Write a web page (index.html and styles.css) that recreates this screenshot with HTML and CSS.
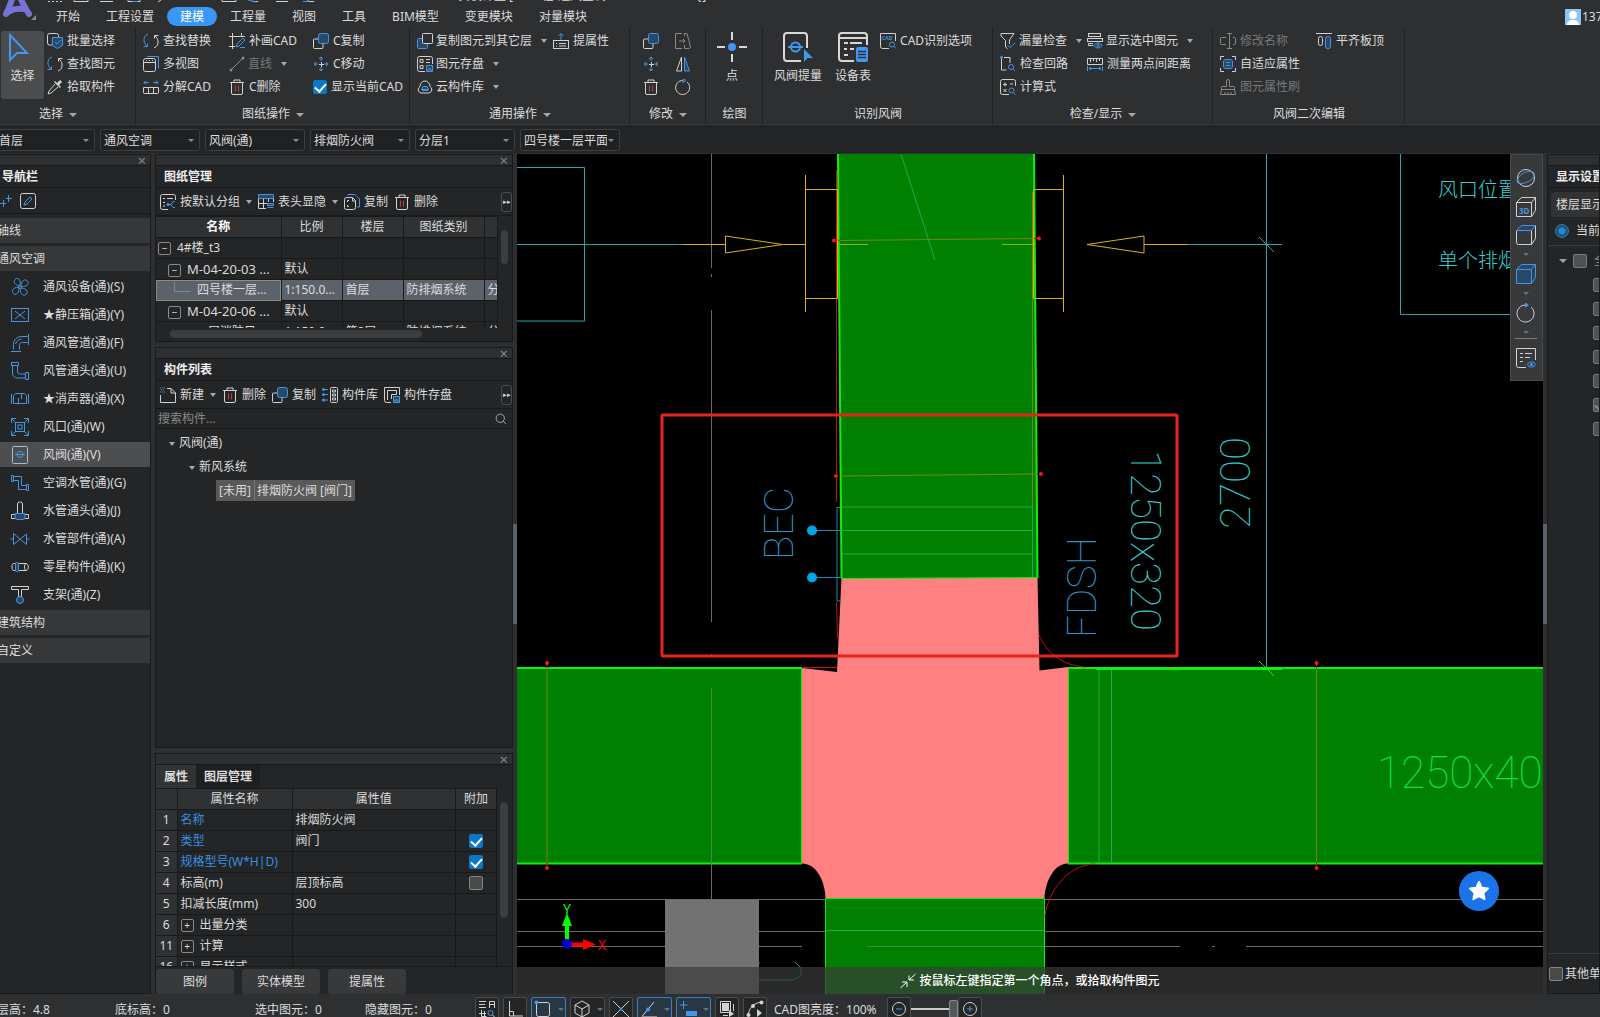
FILE: index.html
```html
<!DOCTYPE html>
<html lang="zh-CN">
<head>
  <meta charset="UTF-8">
  <meta name="viewport" content="width=device-width, initial-scale=1.0">
  <title>安装计量</title>
  <link rel="stylesheet" href="styles.css">
</head>
<body>
  <!-- Icon sprite -->
  <svg class="sprite" aria-hidden="true">
    <symbol id="i-cursor" viewBox="0 0 24 30"><path class="b2" d="M3 3v25l7-7h10z"/></symbol>
    <symbol id="i-batch" viewBox="0 0 16 16"><path class="w" d="M5 12H2.500a2 2 0 0 1-2-2V2.500a2 2 0 0 1 2-2h7a2 2 0 0 1 2 2V4"/><path class="bf" d="M5.500 4.500h10v8l-5 3-5-3z"/><path class="b" d="M8 9l2 2 4-4"/></symbol>
    <symbol id="i-find" viewBox="0 0 16 16"><path class="b" d="M5 1C2 2 .5 5 1 8c.3 2 1.500 4 3 5M.5 13.500h4v-3"/><path class="w" d="M11 15c3-1 4.500-4 4-7-.3-2-1.500-4-3-5M15.500 2.500h-4v3"/></symbol>
    <symbol id="i-picker" viewBox="0 0 16 16"><path class="w" d="M8 5l-6 7-1 3 3-1 7-6"/><path class="wf" d="M7 3l6 6 1-1-2-2 3-3-2-2-3 3-2-2z"/></symbol>
    <symbol id="i-views" viewBox="0 0 16 16"><path class="b" d="M4 .5h11.500v12"/><rect class="w" x=".5" y="2.500" width="12" height="13" rx="2"/><path class="w" d="M.5 6.500h12M3 4.500h1M6 4.500h1M9 4.500h1"/></symbol>
    <symbol id="i-split" viewBox="0 0 16 16"><path class="b" d="M1 3.500h5M3 1.500l-2 2 2 2M10 3.500h5M13 1.500l2 2-2 2"/><path class="w" d="M.5 8.500v5a1 1 0 0 0 1 1h13a1 1 0 0 0 1-1v-5zM5.500 8.500v6M10.500 8.500v6"/></symbol>
    <symbol id="i-draw" viewBox="0 0 16 16"><path class="w" d="M0 3.500h16M3.500 0v16M12.500 0v4M0 13.500h6"/><path class="b" d="M7 14l1-3 6-6 2 2-6 6zM11 14.500h5"/></symbol>
    <symbol id="i-line" viewBox="0 0 16 16"><path class="g" d="M2 14L14 2"/><circle class="gf" cx="2" cy="14" r="1.500"/><circle class="gf" cx="14" cy="2" r="1.500"/></symbol>
    <symbol id="i-trash" viewBox="0 0 16 16"><path class="w" d="M1 3.500h14M5 3V1h6v2M2.500 4v10a1.500 1.500 0 0 0 1.500 1.500h8a1.500 1.500 0 0 0 1.500-1.500V4"/><path class="r" d="M6.500 6.500v6M9.500 6.500v6"/></symbol>
    <symbol id="i-copy" viewBox="0 0 16 16"><path class="w" d="M5 6H1.500a1 1 0 0 0-1 1v7.500a1 1 0 0 0 1 1H9a1 1 0 0 0 1-1V11"/><rect class="bf" x="5.500" y=".5" width="10" height="10" rx="2"/></symbol>
    <symbol id="i-copyto" viewBox="0 0 16 16"><rect class="bf" x=".5" y="5.500" width="10" height="10" rx="1"/><rect class="wd" x="5.500" y=".5" width="10" height="10" rx="1"/></symbol>
    <symbol id="i-move" viewBox="0 0 16 16"><path class="b" d="M8 1v4M8 11v4M1 8h4M11 8h4M6 3l2-2 2 2M6 13l2 2 2-2M3 6L1 8l2 2M13 6l2 2-2 2"/><path class="w" d="M6 8.500h5M8.500 6v5"/></symbol>
    <symbol id="i-upprop" viewBox="0 0 16 16"><path class="b" d="M8 7V1M5.500 3L8 .5 10.500 3"/><rect class="w" x=".5" y="7.500" width="15" height="8"/><path class="w" d="M3 10.500h1M6 10.500h7M3 13h1M6 13h7"/></symbol>
    <symbol id="i-save" viewBox="0 0 16 16"><path class="w" d="M8 15.500H2.500a2 2 0 0 1-2-2v-11a2 2 0 0 1 2-2h11a2 2 0 0 1 2 2V8"/><path class="w" d="M3 3.500h3v3H3zM3 9.500h3v3H3zM9 3.500h4M9 6.500h4"/><path class="bf" d="M9.500 9.500h6v6h-6zM11 15v-2h3v2"/></symbol>
    <symbol id="i-cloud" viewBox="0 0 16 16"><path class="w" d="M4 14a3.500 3.500 0 0 1-1-6.500C3 4 5.500 2 8 2s5 2 5 5.500A3.500 3.500 0 0 1 12 14z"/><path class="bf" d="M4.500 10.500L6 7.500h4l1.500 3zM5 11.500h6"/></symbol>
    <symbol id="i-stretch" viewBox="0 0 16 16"><path class="g" d="M7 .5H.5v15H7M4 8h6M8 6l2 2-2 2M9.500 3V.5H12L15.500 14c0 1-1 1.500-2 1.500h-4V12"/></symbol>
    <symbol id="i-mirror" viewBox="0 0 16 16"><path class="w" d="M6.500 1v14h-5z"/><path class="bf" d="M9.500 1v14h5z"/></symbol>
    <symbol id="i-rotate" viewBox="0 0 16 16"><path class="w" d="M12 3a7 7 0 1 1-4-1.500"/><path class="b" d="M8 0l3 1.500L8 3.500z"/></symbol>
    <symbol id="i-point" viewBox="0 0 30 30"><path class="w2" d="M15 0v8M15 22v8M0 15h8M22 15h8"/><circle class="bs" cx="15" cy="15" r="4"/></symbol>
    <symbol id="i-valveqty" viewBox="0 0 30 30"><path class="w2" d="M18 29H4a3 3 0 0 1-3-3V4a3 3 0 0 1 3-3h17a3 3 0 0 1 3 3v12"/><path class="b2" d="M5 15h15"/><circle class="b2" cx="12.500" cy="15" r="4.500"/><path class="bs" d="M21 17v13l3.500-4H30z"/></symbol>
    <symbol id="i-devtable" viewBox="0 0 30 30"><path class="w2" d="M16 29H4a3 3 0 0 1-3-3V4a3 3 0 0 1 3-3h22a3 3 0 0 1 3 3v9M1 6h28M6 11h4M12 11h12M6 17h3M12 17h4M6 23h4"/><rect class="bs" x="18" y="15" width="12" height="15" rx="2"/><path d="M20 19.500h8M20 22.500h8M20 25.500h8" stroke="#2d2f31" stroke-width="1.500"/></symbol>
    <symbol id="i-cadopt" viewBox="0 0 16 16"><path class="w" d="M9 15.500H2.500a2 2 0 0 1-2-2v-13h15V8"/><text class="tiny" x="2" y="7">CAD</text><circle class="b" cx="12" cy="11.500" r="2.500"/><path class="b" d="M14 13.500l2 2"/></symbol>
    <symbol id="i-funnel" viewBox="0 0 16 16"><path class="w" d="M1 .5h13L9.500 7v4M1 .5V3l4.500 4.500V14l2 1.500"/><path class="b" d="M7.500 12l2.500 2.500L15 10"/></symbol>
    <symbol id="i-loop" viewBox="0 0 16 16"><path class="w" d="M1.500 3v11h5M4 1.500h6V7"/><circle class="bs" cx="1.500" cy="1.500" r="1.500"/><circle class="b" cx="11" cy="11" r="2.500"/><path class="b" d="M13 13l2 2"/></symbol>
    <symbol id="i-calc" viewBox="0 0 16 16"><path class="w" d="M9 15.500H2.500a2 2 0 0 1-2-2v-11a2 2 0 0 1 2-2h11a2 2 0 0 1 2 2V7M3 5.500h4M5 3.500v4M10 5h3M3.500 10l3 3M6.500 10l-3 3"/><circle class="b" cx="11.500" cy="11.500" r="2.500"/><path class="b" d="M13.500 13.500l2 2"/></symbol>
    <symbol id="i-show" viewBox="0 0 16 16"><rect class="w" x="1.500" y=".5" width="12" height="3"/><rect class="w" x=".5" y="5.500" width="15" height="3"/><path class="w" d="M6 12.500H1.500v-2H6"/><path class="bf" d="M6.500 12.500c2.500-3.300 6.500-3.300 9 0-2.500 3.300-6.500 3.300-9 0z"/><circle class="b" cx="11" cy="12.500" r="1"/></symbol>
    <symbol id="i-measure" viewBox="0 0 16 16"><path class="w" d="M.5 8.500v-6h15v6zM3.500 3v3M6.500 3v2M9.500 3v3M12.500 3v2"/><path class="b" d="M.5 10v5M15.500 10v5M2 12.500h12M4 11l-2 1.500L4 14M12 11l2 1.500-2 1.500"/></symbol>
    <symbol id="i-rename" viewBox="0 0 16 16"><path class="g" d="M6 4.500H1.500a1 1 0 0 0-1 1v5a1 1 0 0 0 1 1H6M13 4.500h1.500a1 1 0 0 1 1 1v5a1 1 0 0 1-1 1H13M9.500 1v14M7 .5h5M7 15.500h5"/></symbol>
    <symbol id="i-adapt" viewBox="0 0 16 16"><path class="w" d="M.5 4V.5H4M12 .5h3.500V4M15.500 12v3.500H12M4 15.500H.5V12"/><rect class="bf" x="3.500" y="3.500" width="9" height="9" rx="2"/><path class="b" d="M6 6.500h4M6 9.500h4"/></symbol>
    <symbol id="i-brush" viewBox="0 0 16 16"><path class="g" d="M6.500 7.500V2a1.500 1.500 0 0 1 3 0v5.500h4a1 1 0 0 1 1 1v2h-13v-2a1 1 0 0 1 1-1zM1.500 10.500l-1 5h15l-1-5M5 13v2M8 13v2M11 13v2"/></symbol>
    <symbol id="i-align" viewBox="0 0 16 16"><path class="w" d="M0 .5h16"/><rect class="w" x="2.500" y="3.500" width="4" height="9" rx="2"/><rect class="bf" x="9.500" y="3.500" width="5" height="12" rx="2"/></symbol>
    <symbol id="i-group" viewBox="0 0 16 16"><path class="w" d="M8 15.500H2.500a2 2 0 0 1-2-2v-11a2 2 0 0 1 2-2h11a2 2 0 0 1 2 2V6"/><path class="w" d="M3 4.500h2M7 4.500h6M3 8.500h2M3 12h2"/><path class="b" d="M8 10.500h3l2-3h2M11 10.500l2 3h2"/><circle class="bs" cx="8" cy="10.500" r="1.500"/></symbol>
    <symbol id="i-columns" viewBox="0 0 16 16"><path class="w" d="M8 14.500H.5V4M.5 9.500h9M5.500 1v13M10.500 1v7M15.500 4v4"/><path class="bf" d="M.5.5h15v4H.5zM9.500 9.500h6v2h-6zM9.500 13.500h6"/></symbol>
    <symbol id="i-docs" viewBox="0 0 16 16"><path class="b" d="M4 1.500V.5h7L15.500 5v8H13"/><path class="w" d="M5.500 3.500H2.500a2 2 0 0 0-2 2v8a2 2 0 0 0 2 2h7a2 2 0 0 0 2-2V6.500l-3-3H5.500M8.500 4v3h3M3.500 8V6.500H5M3.500 11v1.500H5"/></symbol>
    <symbol id="i-new" viewBox="0 0 16 16"><path class="w" d="M7 1.500h4L15.500 6v9.500H.5V8M11 1.500V6h4.500"/><path class="b" d="M0 1h1M2 1h1M4 1h1M1 3h1M3 3h1M0 5h1M2 5h1M4 5h1"/></symbol>
    <symbol id="i-lib" viewBox="0 0 16 16"><path class="b" d="M2.500 2.500H6M2.500 7.500H6M2.500 13H6"/><circle class="bs" cx="1.500" cy="2.500" r="1.500"/><circle class="bs" cx="1.500" cy="7.500" r="1.500"/><circle class="bs" cx="1.500" cy="13" r="1.500"/><rect class="w" x="8.500" y=".5" width="7" height="15" rx="1"/><path class="w" d="M10.500 3h3v2h-3zM10.500 7h3v2h-3zM10.500 11h3v2h-3z"/></symbol>
    <symbol id="i-store" viewBox="0 0 16 16"><path class="w" d="M7 15.500H2.500a2 2 0 0 1-2-2V.5h15V8M3.500 13V3.500h9v4h-5V12"/><path class="bf" d="M9.500 9.500h6v6h-6zM11 15v-2h3v2"/></symbol>
    <symbol id="i-search" viewBox="0 0 16 16"><circle class="w" cx="7" cy="7" r="5.500"/><path class="w" d="M11 11l3.500 3.500"/></symbol>
    <!-- navigation -->
    <symbol id="n-fan" viewBox="0 0 20 20"><path class="b" d="M9.500 9C5 8 3 5 5 2.500 8-.5 12 3 9.500 9zM11 9.500c0-5 3-8 6-6 3.500 3-1 7-6 6zM10.500 11c5 0 8 3 6 6-3 3.500-7-1-6-6zM9 10.500c0 5-2 8-5 6.500-4-3 0-7.500 5-6.500z"/><circle class="b" cx="10" cy="10" r="1.500"/></symbol>
    <symbol id="n-box" viewBox="0 0 20 20"><rect class="b" x="1.500" y="3.500" width="17" height="13"/><path class="b" d="M5 6l10 8M15 6L5 14"/></symbol>
    <symbol id="n-duct" viewBox="0 0 20 20"><path class="b" d="M3.500 16.500v-5c0-5 4-8 8-8h6M9.500 16.500v-4c0-2 1-3 3-3h5M18.500 1v11M1 18.500h10M5.500 11c1-3 3-4.500 6-5"/></symbol>
    <symbol id="n-elbow" viewBox="0 0 20 20"><path class="b" d="M1.500 1.500h7v3h-7zM15.500 11.500h3v7h-3zM2.500 5v7c0 3 2 5 5 5H15M7.500 5v5c0 2 1 3 3 3H15"/></symbol>
    <symbol id="n-muffler" viewBox="0 0 20 20"><path class="b" d="M1.500 5v10M18.500 5v10M3.500 6.500l2-2h9l2 2v8h-13zM8.500 14V9M11.500 5v5"/></symbol>
    <symbol id="n-vent" viewBox="0 0 20 20"><path class="b" d="M1.500 6V1.500H6M14 1.500h4.500V6M18.500 14v4.500H14M6 18.500H1.500V14M2 2l3.500 3.500M18 2l-3.500 3.500M18 18l-3.500-3.500M2 18l3.500-3.500"/><rect class="b" x="5.500" y="5.500" width="9" height="9"/><rect class="b" x="8" y="8" width="4" height="4"/></symbol>
    <symbol id="n-valve" viewBox="0 0 20 20"><rect x="2.500" y="1.500" width="15" height="17" rx="1" fill="none" stroke="#9fc0dc"/><circle class="b" cx="10" cy="9.500" r="3"/><path class="b" d="M5 9.500h10"/></symbol>
    <symbol id="n-pipe" viewBox="0 0 20 20"><path class="b" d="M1.500 2.500h2v6h-2zM16.500 11.500h2v6h-2zM4 3.500h7.500v9H16M4 7.500h4.500v9H16"/></symbol>
    <symbol id="n-tee" viewBox="0 0 20 20"><path class="w" d="M7.500 12V3a2 2 0 0 1 2-2h1a2 2 0 0 1 2 2v9M5 13.500H1.500v4H5M15 13.500h3.500v4H15"/><path class="bf" d="M5 12.500h10v5l-2 1H7l-2-1z"/></symbol>
    <symbol id="n-part" viewBox="0 0 20 20"><path class="b" d="M3.500 4.500v11L16.500 5v10.500L3.500 4.500M.5 10h3M16.500 10h3"/></symbol>
    <symbol id="n-misc" viewBox="0 0 20 20"><path class="w" d="M5 6.500H3.500c-2 0-2 7 0 7H5M9 6.500h7c3 0 3 7 0 7H9M16 6.500c-2 1-2 6 0 7"/><rect class="bf" x="5.500" y="5.500" width="3" height="9" rx="1"/></symbol>
    <symbol id="n-hanger" viewBox="0 0 20 20"><path class="w" d="M1.500 1.500h17v3h-7V12h-3V4.500h-7z"/><circle class="bf" cx="10" cy="15" r="3.500"/></symbol>
    <!-- view tools -->
    <symbol id="v-orbit" viewBox="0 0 20 20"><circle class="w" cx="10" cy="10" r="8.500"/><path class="b" d="M1 14c-1-3 4-8 9-10 5-1.500 9 0 8.500 3-1 4-6 7-10 8-3 .7-6.500.8-7.500-1z"/></symbol>
    <symbol id="v-3d" viewBox="0 0 20 20"><path class="w" d="M.5 5.500h15v14H.5zM.5 5.500l5-5h14l-4 5M19.500.5v13l-4 6"/><text class="tiny3d" x="3" y="17">3D</text></symbol>
    <symbol id="v-top" viewBox="0 0 20 20"><path class="w" d="M.5 5.500v12a2 2 0 0 0 2 2h13v-14M19.500.5v13l-4 6"/><path class="bf" d="M.5 5.500l5-5h14l-4 5z"/></symbol>
    <symbol id="v-solid" viewBox="0 0 20 20"><path class="bf" d="M.5 5.500h15v14H.5zM.5 5.500l5-5h14l-4 5M19.500.5v13l-4 6"/></symbol>
    <symbol id="v-spin" viewBox="0 0 20 20"><path class="w" d="M15 4a8.500 8.500 0 1 1-5-2"/><path class="bs" d="M9-1l4 3-4 3z"/></symbol>
    <symbol id="v-list" viewBox="0 0 20 20"><path class="w" d="M10 19.500H2.500a2 2 0 0 1-2-2V.5h19V12M4 5.500h3M9 5.500h7M4 9.500h3M9 9.500h5M4 13.500h3"/><path class="bf" d="M11 16.500c2.500-3.500 6.500-3.500 9 0-2.500 3.500-6.500 3.500-9 0z"/><circle class="bs" cx="15.500" cy="16.500" r="1.500"/></symbol>
    <!-- status bar -->
    <symbol id="s-text" viewBox="0 0 18 18"><path class="w" d="M1 1.500h7M1 4.500h6M1 7.500h7M11.500 8V1.500h5v6.500M11.500 4.500h5M3.500 10v6.500h5M1 13.500h7M6.500 11v5"/><circle class="b" cx="12.500" cy="13" r="2.500"/><path class="w" d="M14.500 15l2 2"/></symbol>
    <symbol id="s-ortho" viewBox="0 0 18 18"><path class="w" d="M3.500 1v15H17M3.500 11.500h4V16"/></symbol>
    <symbol id="s-rect" viewBox="0 0 18 18"><rect class="w" x="2.500" y="2.500" width="13" height="14" rx="2"/><circle class="bs" cx="2.500" cy="2.500" r="2"/></symbol>
    <symbol id="s-cube" viewBox="0 0 18 18"><path class="w" d="M9 1l7 4v8l-7 4-7-4V5zM2 5l7 4 7-4M9 9v8"/></symbol>
    <symbol id="s-cross" viewBox="0 0 18 18"><path class="w" d="M1 1l16 16M17 1L1 17"/><circle class="bs" cx="9" cy="9" r="1.500"/></symbol>
    <symbol id="s-angle" viewBox="0 0 18 18"><path class="w" d="M14 2L2 16.500"/><path class="g" d="M2 16.500h15"/><circle class="bs" cx="8" cy="9.500" r="2"/></symbol>
    <symbol id="s-input" viewBox="0 0 18 18"><path class="b" d="M4.500 1v8M.5 5h8"/><rect class="bs" x="7" y="11" width="11" height="5"/></symbol>
    <symbol id="s-layer" viewBox="0 0 18 18"><path class="w" d="M2.500 1.500h10v11h-10zM15.500 4v7M5 15.500h5"/><path class="wf" d="M4 3h7v8H4zM11 10v7l5-3z"/></symbol>
    <symbol id="s-curve" viewBox="0 0 18 18"><path class="w" d="M2 16C3 8 7 3 16 2"/><circle class="wf" cx="2.500" cy="15" r="2"/><circle class="wf" cx="7" cy="6" r="2"/><circle class="wf" cx="15.500" cy="2.500" r="2"/><path class="wf" d="M11 9v8l5-4z"/></symbol>
    <symbol id="s-minus" viewBox="0 0 18 18"><circle class="w" cx="9" cy="9" r="6.500"/><path class="b" d="M6 9h6"/></symbol>
    <symbol id="s-plus" viewBox="0 0 18 18"><circle class="w" cx="9" cy="9" r="6.500"/><path class="b" d="M6 9h6M9 6v6"/></symbol>
  </svg>

  <header class="top">
    <div class="title-strip">
      <svg class="strip-icons" width="280" height="4" viewBox="0 0 280 4"><path class="w" stroke-dasharray="2 2" d="M0 1.500h14"/><path class="w" d="M26 0v1.500h14V0M52 1.500h13M80 0v1.500h12V0M110 2l3-2M174 0v1.500h14V0M204 1.500h6M228 1.500h12M260 0v1.500h6"/><path class="b" d="M84 1.500h6M200 0l8 2M255 1.500h6"/></svg>
      <span class="title-text">安装计量 [D:\工程\通风空调\M-04-20-03.GAQ]</span>
    </div>
    <svg class="logo" width="40" height="24" viewBox="0 0 40 24"><path d="M13-4C11 3 9 8 6 14c5-5 11-6 17-5M19-5c3 7 6 13 10 19" fill="none" stroke="#7573d8" stroke-width="6" stroke-linecap="round" stroke-linejoin="round"/><path d="M36 15v5h-5z" fill="#8a8a8a"/></svg>
    <nav class="menu">
      <button>开始</button><button>工程设置</button><button class="active">建模</button><button>工程量</button><button>视图</button><button>工具</button><button>BIM模型</button><button>变更模块</button><button>对量模块</button>
      <a class="user" href="#"><svg width="16" height="16" viewBox="0 0 16 16"><path fill="#8ec3f5" d="M0 0h16v16H0z"/><circle cx="8" cy="6" r="4" fill="#fff"/><path d="M2 16c0-4 3-5 6-5s6 1 6 5z" fill="#fff"/></svg><span>137</span></a>
    </nav>

    <div class="ribbon">
      <section class="group g-select">
        <div class="tools">
          <button class="big on"><svg width="24" height="30"><use href="#i-cursor"/></svg>选择</button>
          <div class="cols one">
            <button><svg><use href="#i-batch"/></svg>批量选择</button>
            <button><svg><use href="#i-find"/></svg>查找图元</button>
            <button><svg><use href="#i-picker"/></svg>拾取构件</button>
          </div>
        </div>
        <h2 class="more">选择</h2>
      </section>
      <section class="group">
        <div class="cols three">
          <button><svg><use href="#i-find"/></svg>查找替换</button>
          <button><svg><use href="#i-draw"/></svg>补画CAD</button>
          <button><svg><use href="#i-copy"/></svg>C复制</button>
          <button><svg><use href="#i-views"/></svg>多视图</button>
          <button class="drop" disabled><svg><use href="#i-line"/></svg>直线</button>
          <button><svg><use href="#i-move"/></svg>C移动</button>
          <button><svg><use href="#i-split"/></svg>分解CAD</button>
          <button><svg><use href="#i-trash"/></svg>C删除</button>
          <label class="check"><input type="checkbox" checked>显示当前CAD</label>
        </div>
        <h2 class="more">图纸操作</h2>
      </section>
      <section class="group">
        <div class="cols common">
          <button class="drop"><svg><use href="#i-copyto"/></svg>复制图元到其它层</button>
          <button><svg><use href="#i-upprop"/></svg>提属性</button>
          <button class="drop wide"><svg><use href="#i-save"/></svg>图元存盘</button>
          <button class="drop wide"><svg><use href="#i-cloud"/></svg>云构件库</button>
        </div>
        <h2 class="more">通用操作</h2>
      </section>
      <section class="group">
        <div class="cols edit">
          <button aria-label="复制"><svg><use href="#i-copy"/></svg></button>
          <button aria-label="拉伸" disabled><svg><use href="#i-stretch"/></svg></button>
          <button aria-label="移动"><svg><use href="#i-move"/></svg></button>
          <button aria-label="镜像"><svg><use href="#i-mirror"/></svg></button>
          <button aria-label="删除"><svg><use href="#i-trash"/></svg></button>
          <button aria-label="旋转"><svg><use href="#i-rotate"/></svg></button>
        </div>
        <h2 class="more">修改</h2>
      </section>
      <section class="group">
        <div class="tools single"><button class="big"><svg width="30" height="30"><use href="#i-point"/></svg>点</button></div>
        <h2>绘图</h2>
      </section>
      <section class="group">
        <div class="tools recog">
          <button class="big"><svg width="30" height="30"><use href="#i-valveqty"/></svg>风阀提量</button>
          <button class="big"><svg width="30" height="30"><use href="#i-devtable"/></svg>设备表</button>
          <div class="cols one"><button><svg><use href="#i-cadopt"/></svg>CAD识别选项</button></div>
        </div>
        <h2>识别风阀</h2>
      </section>
      <section class="group">
        <div class="cols inspect">
          <button class="drop"><svg><use href="#i-funnel"/></svg>漏量检查</button>
          <button class="drop"><svg><use href="#i-show"/></svg>显示选中图元</button>
          <button><svg><use href="#i-loop"/></svg>检查回路</button>
          <button><svg><use href="#i-measure"/></svg>测量两点间距离</button>
          <button><svg><use href="#i-calc"/></svg>计算式</button>
        </div>
        <h2 class="more">检查/显示</h2>
      </section>
      <section class="group">
        <div class="cols second">
          <button disabled><svg><use href="#i-rename"/></svg>修改名称</button>
          <button><svg><use href="#i-align"/></svg>平齐板顶</button>
          <button class="wide"><svg><use href="#i-adapt"/></svg>自适应属性</button>
          <button class="wide" disabled><svg><use href="#i-brush"/></svg>图元属性刷</button>
        </div>
        <h2>风阀二次编辑</h2>
      </section>
    </div>
  </header>

  <div class="filters">
    <label class="combo"><select aria-label="楼层"><option>首层</option></select></label>
    <label class="combo"><select aria-label="专业"><option>通风空调</option></select></label>
    <label class="combo"><select aria-label="构件类型"><option>风阀(通)</option></select></label>
    <label class="combo"><select aria-label="构件"><option>排烟防火阀</option></select></label>
    <label class="combo"><select aria-label="分层"><option>分层1</option></select></label>
    <label class="combo"><select aria-label="图纸"><option>四号楼一层平面</option></select></label>
  </div>

  <main class="work">
    <aside class="panel nav">
      <div class="grip"><button aria-label="关闭">×</button></div>
      <h3>导航栏</h3>
      <div class="bar nav-bar">
        <button aria-label="展开"><svg width="12" height="16" viewBox="0 0 12 16"><path class="b" d="M0 10.500h6M3.500 7v7M6 5.500h6M8.500 2v7"/></svg></button>
        <button class="boxed" aria-label="编辑"><svg width="16" height="16" viewBox="0 0 16 16"><rect class="w" x=".5" y=".5" width="15" height="15" rx="2"/><path class="b" d="M4 12l1-3 5-5 2 2-5 5z"/></svg></button>
      </div>
      <div class="nav-list">
        <button class="cat">轴线</button>
        <button class="cat">通风空调</button>
        <button><svg><use href="#n-fan"/></svg>通风设备(通)(S)</button>
        <button><svg><use href="#n-box"/></svg>★静压箱(通)(Y)</button>
        <button><svg><use href="#n-duct"/></svg>通风管道(通)(F)</button>
        <button><svg><use href="#n-elbow"/></svg>风管通头(通)(U)</button>
        <button><svg><use href="#n-muffler"/></svg>★消声器(通)(X)</button>
        <button><svg><use href="#n-vent"/></svg>风口(通)(W)</button>
        <button class="active"><svg><use href="#n-valve"/></svg>风阀(通)(V)</button>
        <button><svg><use href="#n-pipe"/></svg>空调水管(通)(G)</button>
        <button><svg><use href="#n-tee"/></svg>水管通头(通)(J)</button>
        <button><svg><use href="#n-part"/></svg>水管部件(通)(A)</button>
        <button><svg><use href="#n-misc"/></svg>零星构件(通)(K)</button>
        <button><svg><use href="#n-hanger"/></svg>支架(通)(Z)</button>
        <button class="cat">建筑结构</button>
        <button class="cat">自定义</button>
      </div>
    </aside>

    <div class="dock">
      <!-- Drawing management -->
      <section class="panel drawings">
        <div class="grip"><button aria-label="关闭">×</button></div>
        <h3>图纸管理</h3>
        <div class="bar">
          <button class="drop"><svg><use href="#i-group"/></svg>按默认分组</button>
          <button class="drop"><svg><use href="#i-columns"/></svg>表头显隐</button>
          <button><svg><use href="#i-docs"/></svg>复制</button>
          <button><svg><use href="#i-trash"/></svg>删除</button>
          <button class="overflow" aria-label="更多">▸▸</button>
        </div>
        <div class="scroll-area">
          <table class="draw-table">
            <colgroup><col class="c-name"><col class="c-scale"><col class="c-scale"><col class="c-kind"><col></colgroup>
            <thead><tr><th class="strong">名称</th><th>比例</th><th>楼层</th><th>图纸类别</th><th></th></tr></thead>
            <tbody>
              <tr><td class="l0"><i class="box">−</i>4#楼_t3</td><td></td><td></td><td></td><td></td></tr>
              <tr><td class="l1"><i class="box">−</i>M-04-20-03 ...</td><td>默认</td><td></td><td></td><td></td></tr>
              <tr class="sel"><td class="l2"><i class="branch"></i>四号楼一层...</td><td>1:150.0...</td><td>首层</td><td>防排烟系统</td><td>分</td></tr>
              <tr><td class="l1"><i class="box">−</i>M-04-20-06 ...</td><td>默认</td><td></td><td></td><td></td></tr>
              <tr><td class="l3">一层消防风...</td><td>1:150.0...</td><td>第2层</td><td>防排烟系统</td><td>分</td></tr>
            </tbody>
          </table>
          <div class="vtrack"><div class="vthumb short"></div></div>
        </div>
        <div class="htrack"><div class="hthumb"></div></div>
      </section>

      <!-- Component list -->
      <section class="panel components">
        <div class="grip"><button aria-label="关闭">×</button></div>
        <h3>构件列表</h3>
        <div class="bar">
          <button class="drop"><svg><use href="#i-new"/></svg>新建</button>
          <button><svg><use href="#i-trash"/></svg>删除</button>
          <button><svg><use href="#i-copy"/></svg>复制</button>
          <button><svg><use href="#i-lib"/></svg>构件库</button>
          <button><svg><use href="#i-store"/></svg>构件存盘</button>
          <button class="overflow" aria-label="更多">▸▸</button>
        </div>
        <div class="search"><input type="text" aria-label="搜索构件" placeholder="搜索构件..."><svg width="12" height="12"><use href="#i-search"/></svg></div>
        <ul class="tree">
          <li class="t1">风阀(通)</li>
          <li class="t2">新风系统</li>
          <li class="t3"><span>[未用]</span><span>排烟防火阀 [阀门]</span></li>
        </ul>
      </section>

      <!-- Properties -->
      <section class="panel props">
        <div class="grip"><button aria-label="关闭">×</button></div>
        <div class="tabs"><button class="active">属性</button><button>图层管理</button></div>
        <div class="scroll-area">
          <table class="prop-table">
            <colgroup><col class="c-no"><col class="c-prop"><col><col class="c-add"></colgroup>
            <thead><tr><th></th><th>属性名称</th><th>属性值</th><th>附加</th></tr></thead>
            <tbody>
              <tr><th>1</th><td class="link">名称</td><td>排烟防火阀</td><td></td></tr>
              <tr><th>2</th><td class="link">类型</td><td>阀门</td><td class="mid"><input type="checkbox" aria-label="附加类型" checked></td></tr>
              <tr><th>3</th><td class="link">规格型号(W*H|D)</td><td></td><td class="mid"><input type="checkbox" aria-label="附加规格型号" checked></td></tr>
              <tr><th>4</th><td>标高(m)</td><td>层顶标高</td><td class="mid"><input type="checkbox" aria-label="附加标高"></td></tr>
              <tr><th>5</th><td>扣减长度(mm)</td><td>300</td><td></td></tr>
              <tr><th>6</th><td><i class="box">+</i>出量分类</td><td></td><td></td></tr>
              <tr><th>11</th><td><i class="box">+</i>计算</td><td></td><td></td></tr>
              <tr><th>16</th><td><i class="box">+</i>显示样式</td><td></td><td></td></tr>
            </tbody>
          </table>
          <div class="vtrack"><div class="vthumb long"></div></div>
        </div>
        <div class="actions"><button>图例</button><button>实体模型</button><button>提属性</button></div>
      </section>
    </div>

    <div class="splitter"></div>

    <section class="canvas">
      <svg class="cad" viewBox="517 154 1026 840" preserveAspectRatio="xMidYMid slice">
        <!-- axes and walls -->
        <path class="axis" d="M711.500 154V268M711.500 274v3M711.500 310V622M711.500 654v2M517 899.500h1026M517 931.500h1026M517 946.500h285M834 946.500h3M867 946.500h313M1212 946.500h3M1246 946.500h297"/>
        <rect x="665" y="900" width="94" height="94" fill="#727272"/>
        <path class="cy" d="M517 167.500h67.500v153.500H517M517 244.500h165M1188 244.500h94M1266.500 154v515M1259 237l15 15M1400.500 154v160.500H1543"/>
        <text class="cad-zh" x="1438" y="197">风口位置</text>
        <text class="cad-zh" x="1438" y="268">单个排烟</text>
        <!-- ducts -->
        <path fill="#008000" d="M837.500 154H1034l3.500 424h-196zM517 667h285v197H517zM1068 667h475v197h-475zM825 899h219v95H825z"/>
        <path fill="#ff8080" d="M841.500 578h196l2 92.500 28.500-3.500v196.500c-15 0-23 20-23.500 35H825.500c0-15-8-35-23.500-35V668l35 4z"/>
        <path class="edge" d="M838 154l3.500 424M1034 154l3.500 424M517 668h285M517 863.500h285M1068 668h475M1068 863.500h475"/>
        <path class="edge thin" d="M841 578.500l196-1M801.500 668v196M1068.500 668v196M825.500 994v-95.500h219V994"/>
        <path d="M711.500 688v176M867 946.500h177" stroke="#3f8f3f"/>
        <path class="axis" d="M711.500 864v35"/>
        <!-- lines seen through the ducts -->
        <path class="teal" d="M842 507h190M842 530.500h190M842 554h190M1032.500 507v70M1099 669v194M1111.500 669v194M826 930.500h218M901 154l34 106"/>
        <path class="edge thin" d="M1096 669.500h186M1259 661l15 15"/>
        <path d="M1032.500 192v315M837 240.500l198-2M841 476l196-2M547 667v197M1316.500 667v197" stroke="#77860f"/>
        <path class="red" d="M836.500 170v332M836.500 602l1 36M834 241l6-1M1033 238.500h7M547 661v7M547 862v7M1316.500 661v7M1316.500 862v7M803 667.500h34M1039 635c8 18 22 30 46 32M1045 915c4-24 22-50 50-51"/>
        <g fill="#f01818"><circle cx="834" cy="240.500" r="2"/><circle cx="1039" cy="238.500" r="2"/><circle cx="836" cy="476" r="2"/><circle cx="1041" cy="474" r="2"/><circle cx="547" cy="663" r="2"/><circle cx="547" cy="868" r="2"/><circle cx="1316.500" cy="663" r="2"/><circle cx="1316.500" cy="868" r="2"/></g>
        <!-- damper outline and grips -->
        <path class="blue" d="M840 507.500h-3V601h4M812 530.500h29M812 577.500h29"/>
        <circle cx="812" cy="530.500" r="5" fill="#00a5e5"/><circle cx="812" cy="577.500" r="5" fill="#00a5e5"/>
        <!-- flanges and direction arrows -->
        <path class="yellow" d="M682 244.500h43M725.500 236v17l57-8.500zM783 244.500h22M805.500 175v137M805.500 189.500h32v109h-32M1063.500 175v137M1063.500 189.500h-30v109h30M1144 236v17l-57-8.500zM1144 244.500h44"/>
        <path d="M839 244.500h29M1002 244.500h31" stroke="#86b800"/>
        <!-- annotations -->
        <text class="cad-txt blue-txt" transform="translate(793 560) rotate(-90)">BEC</text>
        <text class="cad-txt blue-txt" transform="translate(1096 638) rotate(-90)">FDSH</text>
        <text class="cad-txt" transform="translate(1131 450) rotate(90)">1250x320</text>
        <text class="cad-txt" transform="translate(1250 529) rotate(-90)">2700</text>
        <text class="cad-big" x="1377" y="788">1250x400</text>
        <path class="blue" d="M759 962v2M795 962l6 6v7l-7 5h-35"/>
        <rect x="662" y="415" width="515" height="241" rx="1" fill="none" stroke="#e8241c" stroke-width="3"/>
        <!-- coordinate axes -->
        <path d="M567 944V925" stroke="#0f0" stroke-width="4"/><path d="M562 926l5-13 5 13z" fill="#0f0"/>
        <path d="M567 944.500h17" stroke="#f00" stroke-width="4"/><path d="M583 939l13 5.500-13 5.500z" fill="#f00"/>
        <circle cx="567" cy="944" r="5" fill="#0000c8"/>
        <text class="axis-y" x="563" y="914">Y</text><text class="axis-x" x="598" y="950">X</text>
      </svg>
      <div class="view-tools">
        <button aria-label="动态观察"><svg><use href="#v-orbit"/></svg></button>
        <button aria-label="三维"><svg><use href="#v-3d"/></svg></button>
        <button class="dd" aria-label="俯视"><svg><use href="#v-top"/></svg></button>
        <button class="dd" aria-label="实体"><svg><use href="#v-solid"/></svg></button>
        <button class="dd" aria-label="旋转视图"><svg><use href="#v-spin"/></svg></button>
        <hr>
        <button aria-label="显示列表"><svg><use href="#v-list"/></svg></button>
      </div>
      <button class="star" aria-label="收藏"><svg width="22" height="22" viewBox="0 0 22 22"><path fill="#fff" stroke="#fff" stroke-width="2" stroke-linejoin="round" d="M11 2l2.700 5.700 6.300.9-4.600 4.400 1.200 6.200L11 16.200l-5.600 3 1.200-6.200L2 8.600l6.300-.9z"/></svg></button>
      <p class="hint"><svg width="16" height="16" viewBox="0 0 16 16"><path fill="none" stroke="#fff" d="M15.500 1L9 7M9 2.500V7h5M.5 15L7 9M2 9h5v5"/></svg>按鼠标左键指定第一个角点，或拾取构件图元</p>
    </section>

    <div class="splitter"></div>

    <aside class="panel display">
      <div class="grip"></div>
      <h3>显示设置</h3>
      <div class="tabs"><button class="active">楼层显示</button></div>
      <label class="radio"><input type="radio" name="floor" checked>当前楼层</label>
      <div class="floors">
        <label class="root"><input type="checkbox" disabled>全部</label>
        <input type="checkbox" aria-label="楼层1" disabled>
        <input type="checkbox" aria-label="楼层2" disabled>
        <input type="checkbox" aria-label="楼层3" disabled>
        <input type="checkbox" aria-label="楼层4" disabled>
        <input type="checkbox" aria-label="楼层5" disabled>
        <input type="checkbox" aria-label="楼层6" checked disabled>
        <input type="checkbox" aria-label="楼层7" disabled>
      </div>
      <label class="other"><input type="checkbox">其他单体</label>
    </aside>
  </main>

  <footer class="status">
    <div class="info"><span>层高：4.8</span><span>底标高：0</span><span>选中图元：0</span><span>隐藏图元：0</span></div>
    <div class="snaps">
      <button aria-label="文字查找"><svg><use href="#s-text"/></svg></button>
      <button aria-label="正交"><svg><use href="#s-ortho"/></svg></button>
      <button class="on dd" aria-label="框选"><svg><use href="#s-rect"/></svg></button>
      <button class="dd" aria-label="三维捕捉"><svg><use href="#s-cube"/></svg></button>
      <button aria-label="交点"><svg><use href="#s-cross"/></svg></button>
      <button class="on dd" aria-label="角度"><svg><use href="#s-angle"/></svg></button>
      <button class="on dd" aria-label="动态输入"><svg><use href="#s-input"/></svg></button>
      <button aria-label="图层"><svg><use href="#s-layer"/></svg></button>
      <button aria-label="曲线"><svg><use href="#s-curve"/></svg></button>
    </div>
    <label for="bright">CAD图亮度：100%</label>
    <div class="zoom">
      <button aria-label="降低亮度"><svg><use href="#s-minus"/></svg></button>
      <input type="range" id="bright" min="0" max="100" value="100">
      <button aria-label="提高亮度"><svg><use href="#s-plus"/></svg></button>
    </div>
  </footer>
</body>
</html>
```
FILE: styles.css
```css
* {
  margin: 0;
  padding: 0;
  box-sizing: border-box;
}

body {
  height: 100vh;
  display: flex;
  flex-direction: column;
  overflow: hidden;
  background: #2d2f31;
  color: #dcdcdc;
  font: 12px/16px "Noto Sans", "Noto Sans CJK SC", sans-serif;
}

button,
input,
select {
  font: inherit;
  color: inherit;
  background: none;
  border: 0;
  outline: 0;
}

button {
  white-space: nowrap;
}

button svg,
.hint svg {
  flex: none;
  overflow: visible;
}

h2,
h3 {
  font-size: 12px;
  font-weight: 400;
}

.sprite {
  position: absolute;
  width: 0;
  height: 0;
}

/* Icon strokes */
.w, .b, .g, .r, .w2, .b2 { fill: none; }
.w { stroke: #d2d2d2; }
.wd { fill: #2d2f31; stroke: #d2d2d2; }
.wf { fill: #d2d2d2; }
.w2 { stroke: #d8d8d8; stroke-width: 2; }
.b { stroke: #4795e0; }
.b2 { stroke: #3f97f0; stroke-width: 2; }
.bf { fill: #274a6b; stroke: #4795e0; }
.bs { fill: #3f97f0; }
.g { stroke: #8a8a8a; }
.gf { fill: #8a8a8a; }
.r { stroke: #c0393b; }

.tiny {
  font-size: 5px;
  font-weight: 700;
  fill: #4795e0;
}

.tiny3d {
  font-size: 8px;
  font-weight: 700;
  fill: #4795e0;
}

/* Top */
.top {
  flex: none;
  border-bottom: 1px solid #1c1d1e;
}

.title-strip {
  height: 4px;
  display: flex;
  align-items: flex-end;
  overflow: hidden;
  padding-left: 48px;
}

.title-text {
  margin-left: 130px;
}

.logo {
  position: absolute;
  left: 0;
  top: 0;
}

.menu {
  display: flex;
  height: 24px;
  padding: 3px 0 2px 43px;
}

.menu button {
  padding: 0 13px;
  height: 19px;
}

.menu .active {
  background: #3897f7;
  border-radius: 10px;
  color: #fff;
}

.user {
  display: flex;
  align-items: center;
  gap: 1px;
  width: 35px;
  margin-left: auto;
  color: inherit;
  text-decoration: none;
}

.user svg {
  flex: none;
}

.ribbon {
  display: flex;
  height: 98px;
}

.group {
  display: flex;
  flex-direction: column;
  flex: none;
  border-right: 1px solid #1f2022;
  margin-bottom: 2px;
  padding: 1px 6px 0 7px;
}

.group h2 {
  margin-top: auto;
  height: 19px;
  line-height: 18px;
  text-align: center;
}

.g-select {
  padding: 1px 20px 0 1px;
}

.more::after,
.drop::after {
  content: "";
  display: inline-block;
  border: 3px solid transparent;
  border-top: 4px solid #a8a8a8;
  border-bottom: 0;
  margin-left: 6px;
  vertical-align: middle;
}

.more::after {
  border-width: 4px 4px 0;
}

.tools {
  display: flex;
  gap: 3px;
}

.big {
  display: flex;
  flex-direction: column;
  align-items: center;
  gap: 6px;
  height: 68px;
  padding-top: 3px;
}

.big.on {
  width: 43px;
  margin-top: 2px;
  padding-top: 1px;
  background: #4a4c4e;
  border-radius: 3px;
}

.big.on svg {
  margin-right: 8px;
}

.cols {
  display: grid;
  grid-auto-rows: 23px;
}

.cols button,
.check {
  display: flex;
  align-items: center;
  gap: 4px;
  white-space: nowrap;
}

.cols .drop {
  gap: 3px;
}

.cols svg,
.bar svg {
  width: 16px;
  height: 16px;
}

.cols button:disabled {
  color: #77797b;
}

.wide { grid-column: 1 / -1; }
.three { grid-template-columns: 86px 84px 90px; }
.common { grid-template-columns: 136px 70px; }
.edit { grid-template-columns: 32px 20px; padding: 0 4px 0 6px; }
.single { padding: 0 9px 0 4px; }
.recog { padding: 0 14px 0 4px; gap: 13px; }
.recog .cols { margin-left: -4px; }
.inspect { grid-template-columns: 87px 119px; }
.second { grid-template-columns: 96px 82px; }

/* Check boxes */
input[type="checkbox"] {
  appearance: none;
  flex: none;
  width: 14px;
  height: 14px;
  border: 1px solid #858585;
  border-radius: 2px;
  background: #48494b;
}

input[type="checkbox"]:checked {
  display: inline-grid;
  place-items: start center;
  background: #0a78c8;
  border-color: #0a78c8;
}

input[type="checkbox"]:checked::after {
  content: "";
  width: 5px;
  height: 9px;
  border: solid #fff;
  border-width: 0 2px 2px 0;
  transform: rotate(42deg);
}

/* Filter bar */
.filters {
  flex: none;
  display: flex;
  gap: 5px;
  height: 26px;
  margin-bottom: 1px;
  padding: 2px 0;
  background: #242527;
}

.combo {
  position: relative;
  width: 100px;
}

.combo:first-child {
  margin-left: -5px;
}

.combo select {
  appearance: none;
  width: 100%;
  height: 22px;
  padding: 1px 12px 0 3px;
  background: #202123;
  border: 1px solid #3c3e40;
  border-radius: 3px;
}

.combo::after {
  content: "";
  position: absolute;
  right: 6px;
  top: 10px;
  border: 3px solid transparent;
  border-top-color: #8c8c8c;
  border-bottom: 0;
  pointer-events: none;
}

/* Work area */
.work {
  flex: 1;
  display: flex;
  min-height: 0;
}

.panel {
  display: flex;
  flex-direction: column;
  background: #232527;
  border: 1px solid #18191a;
}

.grip {
  flex: none;
  height: 11px;
  background: #2d2f31;
  border-bottom: 1px solid #18191a;
  text-align: right;
}

.grip button {
  display: block;
  height: 10px;
  margin-left: auto;
  padding: 0 4px;
  font-size: 15px;
  line-height: 9px;
  color: #858585;
}

.panel h3 {
  flex: none;
  height: 22px;
  padding-left: 8px;
  line-height: 22px;
  font-weight: 600;
  color: #eee;
  border-bottom: 1px solid #18191a;
}

.bar {
  flex: none;
  display: flex;
  align-items: center;
  gap: 6px;
  height: 28px;
  padding: 1px 0 0 4px;
  border-bottom: 1px solid #18191a;
}

.bar button {
  display: flex;
  align-items: center;
  gap: 4px;
}

.bar .drop::after {
  margin-left: 2px;
}

.bar .overflow {
  margin-left: auto;
  width: 11px;
  height: 20px;
  justify-content: center;
  gap: 0;
  border: 1px solid #4a4c4e;
  border-radius: 3px;
  font-size: 7px;
}

.nav {
  width: 151px;
  border-left: 0;
}

.nav h3 {
  padding-left: 2px;
}

.nav-bar {
  padding: 0;
  gap: 8px;
  height: 26px;
}

.nav-bar button:first-child svg {
  width: 12px;
}

.nav-list {
  flex: 1;
  display: flex;
  flex-direction: column;
  gap: 3px;
  padding-top: 4px;
}

.nav-list button {
  display: flex;
  align-items: center;
  gap: 13px;
  height: 25px;
  padding-left: 10px;
}

.nav-list .cat {
  padding: 0;
  text-indent: -3px;
  background: #353739;
}

.nav-list .active {
  background: #4c4e50;
}

.nav-list svg {
  width: 20px;
  height: 20px;
}

.dock {
  display: flex;
  flex-direction: column;
  gap: 5px;
  width: 358px;
  margin-left: 4px;
}

.drawings {
  height: 188px;
}

.components {
  flex: 1;
}

.props {
  height: 241px;
  border-bottom: 0;
}

.scroll-area {
  flex: 1;
  display: flex;
  overflow: hidden;
}

table {
  table-layout: fixed;
  border-collapse: collapse;
  white-space: nowrap;
}

.draw-table {
  width: 342px;
}

.prop-table {
  width: 341px;
}

th,
td {
  height: 21px;
  padding: 0 3px;
  border: 1px solid #18191a;
  font-weight: 400;
  text-align: left;
  overflow: hidden;
}

tr > :first-child {
  border-left: 0;
}

thead th,
.prop-table th {
  background: #2f3133;
  padding: 0;
  text-align: center;
}

thead th.strong {
  font-weight: 700;
  color: #fff;
}

.c-name { width: 125px; }
.c-scale { width: 61px; }
.c-kind { width: 81px; }
.c-no { width: 21px; }
.c-prop { width: 115px; }
.c-add { width: 41px; }

.box {
  display: inline-block;
  width: 13px;
  height: 13px;
  margin-right: 6px;
  border: 1px solid #8a8a8a;
  border-radius: 2px;
  font-size: 10px;
  font-style: normal;
  line-height: 10px;
  text-align: center;
}

.draw-table .l0 { padding-left: 2px; }
.draw-table .l1 { padding-left: 12px; font-size: 13px; }
.draw-table .l2 { padding-left: 18px; }
.draw-table .l3 { padding-left: 40px; }

.branch {
  display: inline-block;
  width: 17px;
  height: 10px;
  margin-right: 6px;
  border: solid #888;
  border-width: 0 0 1px 1px;
  vertical-align: top;
}

.sel td {
  background: #5c626a;
}

.sel td:first-child {
  outline: 1px solid #8b8b88;
  outline-offset: -1px;
}

.vtrack {
  flex: 1;
  padding: 14px 4px 0 3px;
}

.vthumb {
  background: #3b3d3f;
  border-radius: 4px;
}

.short { height: 34px; }
.long { height: 116px; }

.htrack {
  height: 13px;
  padding: 2px 90px 3px 14px;
}

.hthumb {
  height: 8px;
  background: #3b3d3f;
  border-radius: 4px;
}

.search {
  display: flex;
  align-items: center;
  height: 20px;
  padding: 0 5px 0 2px;
  border-bottom: 1px solid #18191a;
}

.search input {
  flex: 1;
}

.search input::placeholder {
  color: #8a8a8a;
}

.tree {
  list-style: none;
  padding-top: 2px;
}

.tree li {
  height: 24px;
  line-height: 24px;
}

.t1 { padding-left: 13px; }
.t2 { padding-left: 33px; }
.t3 { display: flex; padding: 1px 0 2px 60px; }

.t1::before,
.t2::before {
  content: "";
  display: inline-block;
  border: 3px solid transparent;
  border-top: 4px solid #a8a8a8;
  border-bottom: 0;
  margin-right: 4px;
  vertical-align: middle;
}

.t3 span {
  padding: 0 3px;
  line-height: 21px;
  background: #59595a;
}

.t3 span + span {
  padding-left: 2px;
  border-left: 1px solid #777;
}

.tabs {
  flex: none;
  display: flex;
  height: 23px;
}

.tabs button {
  padding: 1px 8px 0;
  background: #1e1f21;
  font-weight: 600;
}

.tabs .active {
  background: #313335;
}

.link {
  color: #3a8fe0;
}

td.mid {
  padding: 0;
}

.mid input,
.mid input:checked {
  display: grid;
  margin: 0 auto;
}

.actions {
  flex: none;
  display: flex;
  gap: 8px;
  height: 28px;
  padding: 2px 0 0;
  border-top: 1px solid #18191a;
}

.actions button {
  width: 78px;
  background: #38393b;
  border-radius: 3px;
}

.splitter {
  flex: none;
  width: 4px;
  background: linear-gradient(#5b626c, #5b626c) center / 4px 100px no-repeat;
}

/* Canvas */
.canvas {
  position: relative;
  flex: 1;
  min-width: 0;
  background: #000;
  overflow: hidden;
}

.cad {
  display: block;
  width: 100%;
  height: 100%;
}

.cad .axis { fill: none; stroke: #6a6a6a; }
.cad .cy { fill: none; stroke: #2aa5a5; }
.cad .teal { fill: none; stroke: #12b050; }
.cad .edge { fill: none; stroke: #10ee10; stroke-width: 2; }
.cad .thin { stroke-width: 1; }
.cad .red { fill: none; stroke: #c01414; }
.cad .blue { fill: none; stroke: #2585b5; }
.cad .yellow { fill: none; stroke: #d8b020; }

.cad-txt,
.cad-big {
  font-family: Roboto, "Open Sans", sans-serif;
  font-weight: 100;
  font-size: 42px;
  fill: #35c8c8;
}

.blue-txt {
  font-size: 40px;
  fill: #2c94c8;
}

.cad-big {
  font-size: 44px;
  fill: #10e050;
}

.cad-zh {
  font: 300 20px "Noto Sans CJK SC", sans-serif;
  fill: #35d0d0;
}

.axis-y,
.axis-x {
  font-size: 14px;
  fill: #0f0;
}

.axis-x {
  fill: #f00;
}

.view-tools {
  position: absolute;
  top: 0;
  right: 0;
  width: 33px;
  height: 227px;
  padding: 6px 1px 0 0;
  background: #38393b;
  border: 1px solid #48494b;
}

.view-tools button {
  display: block;
  width: 30px;
  height: 29px;
  padding-top: 4px;
}

.view-tools svg {
  display: block;
  width: 20px;
  height: 20px;
  margin: 0 auto;
}

.view-tools .dd {
  height: 39px;
}

.dd::after {
  content: "";
  display: block;
  width: 0;
  margin: 8px auto 0;
  border: 3px solid transparent;
  border-top-color: #6b7078;
  border-bottom: 0;
}

.view-tools hr {
  border: 0;
  border-top: 1px solid #77797b;
  margin: 2px 4px 2px;
}

.star {
  position: absolute;
  right: 44px;
  bottom: 83px;
  display: grid;
  place-items: center;
  width: 40px;
  height: 40px;
  border-radius: 50%;
  background: #1a73e8;
}

.hint {
  position: absolute;
  left: 0;
  right: 0;
  bottom: 0;
  display: flex;
  align-items: center;
  justify-content: center;
  gap: 3px;
  height: 27px;
  background: rgba(58, 58, 58, 0.7);
  color: #fff;
  font-weight: 500;
}

/* Display settings */
.display {
  width: 53px;
  overflow: hidden;
  white-space: nowrap;
}

.display .tabs {
  height: 29px;
  padding: 4px 0 0 3px;
}

.display .tabs button {
  padding-left: 5px;
  border-radius: 4px 0 0 0;
  font-weight: 400;
}

.radio {
  display: flex;
  align-items: center;
  gap: 7px;
  height: 29px;
  padding-left: 7px;
  border-bottom: 1px solid #3a3c3e;
}

.radio input {
  appearance: none;
  flex: none;
  width: 14px;
  height: 14px;
  border: 1px solid #2b7fb8;
  border-radius: 50%;
  background: radial-gradient(circle, #1d8be0 3px, #24506e 4px);
}

.floors {
  flex: 1;
  display: flex;
  flex-direction: column;
  gap: 10px;
  padding: 8px 0 0 45px;
}

.floors input[type="checkbox"] {
  background: #505153;
  border-color: #77797b;
}

.floors input[type="checkbox"]::after {
  border-color: #8a8a8a;
}

.floors .root {
  display: flex;
  align-items: center;
  gap: 7px;
  height: 14px;
  margin-left: -34px;
  color: #9a9a9a;
}

.root::before {
  content: "";
  border: 4px solid transparent;
  border-top-color: #a0a0a0;
  border-bottom: 0;
  margin-right: -1px;
}

.other {
  display: flex;
  align-items: center;
  gap: 2px;
  height: 40px;
  padding: 1px 0 0 1px;
  border-top: 1px solid #3a3c3e;
}

/* Status bar */
.status {
  flex: none;
  display: flex;
  height: 23px;
  padding-top: 3px;
  overflow: hidden;
  white-space: nowrap;
}

.info {
  display: grid;
  grid-template-columns: 118px 140px 110px 110px;
  margin-left: -3px;
}

.info,
.status label {
  line-height: 26px;
}

.snaps {
  display: flex;
  gap: 4px;
  margin-right: 7px;
}

.snaps button,
.zoom button {
  display: flex;
  align-items: center;
  justify-content: center;
  gap: 6px;
  width: 24px;
  height: 24px;
  background: #242527;
  border: 1px solid #4a4c4e;
  border-radius: 2px;
}

.snaps .dd {
  width: 35px;
}

.snaps .on {
  background: #293644;
  border-color: #3f7fc0;
}

.snaps svg,
.zoom svg {
  width: 18px;
  height: 18px;
}

.snaps .dd::after {
  margin: 0;
}

.zoom {
  display: flex;
  margin-left: 10px;
}

.zoom input {
  appearance: none;
  width: 47px;
  height: 24px;
  background: linear-gradient(#c8c8c8, #c8c8c8) center / 100% 2px no-repeat;
}

.zoom input::-webkit-slider-thumb {
  appearance: none;
  width: 9px;
  height: 18px;
  background: #55575a;
  border: 1px solid #8a8a8a;
  border-radius: 2px;
}
```
